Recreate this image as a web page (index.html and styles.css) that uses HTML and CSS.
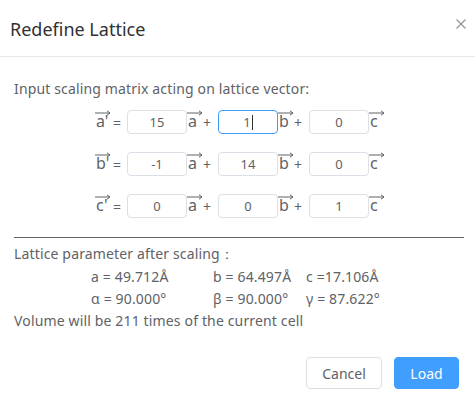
FILE: index.html
```html
<!DOCTYPE html>
<html>
<head>
<meta charset="utf-8">
<link rel="stylesheet" href="styles.css">
</head>
<body>
<div class="dialog">
  <div class="header">
    <span class="title">Redefine Lattice</span>
    <svg class="close" width="10" height="10" viewBox="0 0 10 10"><path d="M0.5 0.5L9.5 9.5M9.5 0.5L0.5 9.5" stroke="#909399" stroke-width="1.1" fill="none"/></svg>
  </div>
  <div class="body">
    <div class="intro">Input scaling matrix acting on lattice vector:</div>
    <div class="matrix">
      <div class="row">
        <span class="vec lhs"><svg class="arr" width="16" height="6" viewBox="0 0 16 6"><path d="M0 3H15M12 0.8L15 3L12 5.2" stroke="#606266" stroke-width="1" fill="none"/></svg><span class="let">a'</span></span><span class="eq">=</span>
        <span class="inp">15</span>
        <span class="vec"><svg class="arr" width="16" height="6" viewBox="0 0 16 6"><path d="M0 3H15M12 0.8L15 3L12 5.2" stroke="#606266" stroke-width="1" fill="none"/></svg><span class="let">a</span></span><span class="plus">+</span>
        <span class="inp focus">1<span class="caret"></span></span>
        <span class="vec"><svg class="arr" width="16" height="6" viewBox="0 0 16 6"><path d="M0 3H15M12 0.8L15 3L12 5.2" stroke="#606266" stroke-width="1" fill="none"/></svg><span class="let">b</span></span><span class="plus">+</span>
        <span class="inp">0</span>
        <span class="vec"><svg class="arr" width="16" height="6" viewBox="0 0 16 6"><path d="M0 3H15M12 0.8L15 3L12 5.2" stroke="#606266" stroke-width="1" fill="none"/></svg><span class="let">c</span></span>
      </div>
      <div class="row">
        <span class="vec lhs"><svg class="arr" width="16" height="6" viewBox="0 0 16 6"><path d="M0 3H15M12 0.8L15 3L12 5.2" stroke="#606266" stroke-width="1" fill="none"/></svg><span class="let">b'</span></span><span class="eq">=</span>
        <span class="inp">-1</span>
        <span class="vec"><svg class="arr" width="16" height="6" viewBox="0 0 16 6"><path d="M0 3H15M12 0.8L15 3L12 5.2" stroke="#606266" stroke-width="1" fill="none"/></svg><span class="let">a</span></span><span class="plus">+</span>
        <span class="inp">14</span>
        <span class="vec"><svg class="arr" width="16" height="6" viewBox="0 0 16 6"><path d="M0 3H15M12 0.8L15 3L12 5.2" stroke="#606266" stroke-width="1" fill="none"/></svg><span class="let">b</span></span><span class="plus">+</span>
        <span class="inp">0</span>
        <span class="vec"><svg class="arr" width="16" height="6" viewBox="0 0 16 6"><path d="M0 3H15M12 0.8L15 3L12 5.2" stroke="#606266" stroke-width="1" fill="none"/></svg><span class="let">c</span></span>
      </div>
      <div class="row">
        <span class="vec lhs"><svg class="arr" width="16" height="6" viewBox="0 0 16 6"><path d="M0 3H15M12 0.8L15 3L12 5.2" stroke="#606266" stroke-width="1" fill="none"/></svg><span class="let">c'</span></span><span class="eq">=</span>
        <span class="inp">0</span>
        <span class="vec"><svg class="arr" width="16" height="6" viewBox="0 0 16 6"><path d="M0 3H15M12 0.8L15 3L12 5.2" stroke="#606266" stroke-width="1" fill="none"/></svg><span class="let">a</span></span><span class="plus">+</span>
        <span class="inp">0</span>
        <span class="vec"><svg class="arr" width="16" height="6" viewBox="0 0 16 6"><path d="M0 3H15M12 0.8L15 3L12 5.2" stroke="#606266" stroke-width="1" fill="none"/></svg><span class="let">b</span></span><span class="plus">+</span>
        <span class="inp">1</span>
        <span class="vec"><svg class="arr" width="16" height="6" viewBox="0 0 16 6"><path d="M0 3H15M12 0.8L15 3L12 5.2" stroke="#606266" stroke-width="1" fill="none"/></svg><span class="let">c</span></span>
      </div>
    </div>
    <div class="divider"></div>
    <div class="line first">Lattice parameter after scaling：</div>
    <div class="params">
      <span>a = 49.712Å</span><span>b = 64.497Å</span><span>c =17.106Å</span>
      <span>α = 90.000°</span><span>β = 90.000°</span><span>γ = 87.622°</span>
    </div>
    <div class="line">Volume will be 211 times of the current cell</div>
  </div>
  <div class="footer">
    <button class="btn">Cancel</button>
    <button class="btn primary">Load</button>
  </div>
</div>
</body>
</html>
```
FILE: styles.css
```css
* { box-sizing: border-box; }
body {
  margin: 0;
  background: #fff;
  font-family: "Noto Sans", "Open Sans", sans-serif;
  color: #606266;
}
.dialog {
  width: 475px;
  height: 402px;
  background: #fff;
}
.header {
  height: 57px;
  border-bottom: 1px solid #e8e8e8;
  display: flex;
  align-items: flex-start;
  justify-content: space-between;
  padding: 15px 9px 0 10px;
}
.title {
  font-size: 18px;
  line-height: 28px;
  color: #303133;
}
.close { margin-top: 4px; }
.body {
  padding: 20px 14px 0 14px;
}
.intro {
  font-size: 14px;
  line-height: 24px;
  letter-spacing: 0.15px;
}
.matrix {
  display: flex;
  flex-direction: column;
  align-items: center;
  gap: 18px;
  margin-top: 9px;
  padding-left: 1px;
}
.row {
  display: flex;
  align-items: center;
  height: 24px;
  font-size: 14px;
}
.vec {
  display: inline-flex;
  flex-direction: column;
  align-items: flex-start;
  width: 12px;
  margin-top: -4px;
}
.vec.lhs { width: 18px; }
.arr { display: block; margin-bottom: -3px; }
.let {
  font-size: 16px;
  line-height: 17px;
  padding-left: 1px;
}
.eq { margin: 0 6px 0 0; font-size: 14px; }
.plus { margin: 0 7px 0 4px; }
.inp {
  width: 60px;
  height: 24px;
  border: 1px solid #dcdfe6;
  border-radius: 4px;
  display: inline-flex;
  align-items: center;
  justify-content: center;
  font-size: 13px;
  color: #606266;
}
.inp.focus { border-color: #409eff; }
.caret {
  display: inline-block;
  width: 1px;
  height: 15px;
  background: #303133;
  margin-left: 1px;
}
.divider {
  height: 1px;
  background: #606266;
  margin: 19px -3px 0 0;
}
.line {
  font-size: 14px;
  line-height: 22px;
  letter-spacing: 0.15px;
}
.line.first { margin-top: 5px; }
.params {
  display: grid;
  grid-template-columns: 122px 93px auto;
  padding-left: 77px;
  font-size: 14px;
  line-height: 22px;
  letter-spacing: 0.15px;
  margin-top: 1px;
}
.footer {
  display: flex;
  justify-content: flex-end;
  gap: 12px;
  padding: 25px 16px 0 0;
}
.btn {
  height: 32px;
  padding: 0 15px;
  border: 1px solid #dcdfe6;
  border-radius: 4px;
  background: #fff;
  color: #606266;
  font-family: inherit;
  font-size: 14px;
}
.btn:first-child { width: 76px; }
.btn.primary {
  width: 65px;
  background: #409eff;
  border-color: #409eff;
  color: #fff;
}
```
